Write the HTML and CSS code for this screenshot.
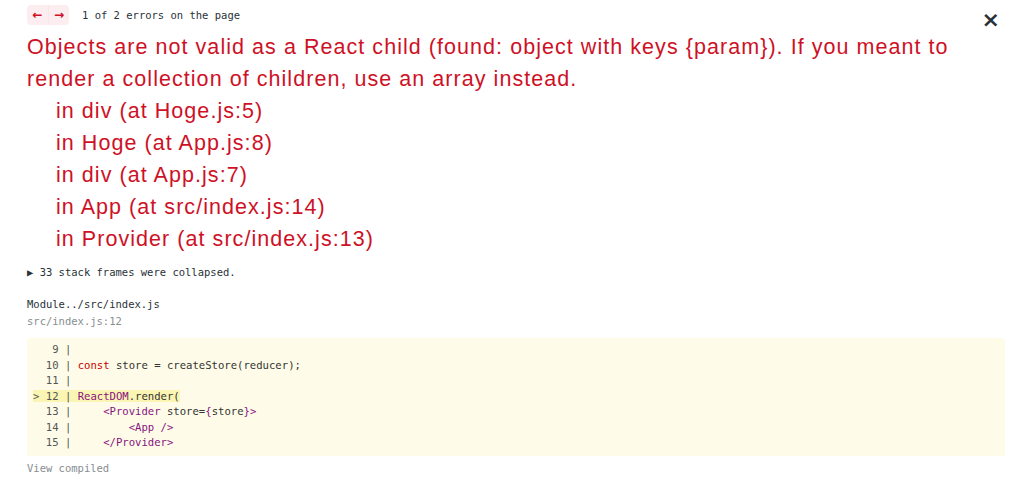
FILE: index.html
```html
<!DOCTYPE html>
<html>
<head>
  <title>Error overlay</title>
  <link rel="stylesheet" href="styles.css">
</head>
<body>
  <div class="overlay">
    <div class="header-bar">
      <div class="nav">
        <button class="nav-btn left">&larr;</button>
        <button class="nav-btn right">&rarr;</button>
      </div>
      <span class="nav-count">1 of 2 errors on the page</span>
    </div>
    <button class="close-btn" title="Close">&times;</button>

    <div class="error-title">
      <div class="message">Objects are not valid as a React child (found: object with keys {param}). If you meant to render a collection of children, use an array instead.</div>
      <div class="stack-line">in div (at Hoge.js:5)</div>
      <div class="stack-line">in Hoge (at App.js:8)</div>
      <div class="stack-line">in div (at App.js:7)</div>
      <div class="stack-line">in App (at src/index.js:14)</div>
      <div class="stack-line">in Provider (at src/index.js:13)</div>
    </div>

    <div class="collapsed">&#9654; 33 stack frames were collapsed.</div>

    <div class="frame">
      <div class="frame-name">Module../src/index.js</div>
      <div class="frame-file">src/index.js:12</div>
      <pre class="code"><span class="ln">   9 | </span>
<span class="ln">  10 | </span><span class="kw">const</span> store = createStore(reducer);
<span class="ln">  11 | </span>
<span class="mark"><span class="ln">&gt; 12 | </span><span class="obj">ReactDOM</span>.render(</span>
<span class="ln">  13 | </span>    <span class="tag">&lt;Provider</span> store=<span class="tag">{</span>store<span class="tag">}&gt;</span>
<span class="ln">  14 | </span>        <span class="tag">&lt;App /&gt;</span>
<span class="ln">  15 | </span>    <span class="tag">&lt;/Provider&gt;</span></pre>
      <div class="view-compiled">View compiled</div>
    </div>
  </div>
</body>
</html>
```

FILE: styles.css
```css
* {
  margin: 0;
  padding: 0;
  box-sizing: border-box;
}

body {
  background: #ffffff;
  color: #293238;
  font-family: 'DejaVu Sans Mono', 'Liberation Mono', monospace;
  font-size: 10.5px;
}

.overlay {
  position: relative;
  padding: 4px 19px 0 27px;
}

.header-bar {
  display: flex;
  align-items: center;
  height: 21px;
}

.nav {
  display: flex;
  margin-right: 13px;
}

.nav-btn {
  width: 21px;
  height: 20px;
  border: none;
  background: rgba(206, 17, 38, 0.07);
  color: #ce1126;
  font-family: 'DejaVu Sans', sans-serif;
  font-size: 12px;
  font-weight: bold;
  line-height: 20px;
  cursor: pointer;
}

.nav-btn.left {
  border-radius: 4px 0 0 4px;
}

.nav-btn.right {
  border-radius: 0 4px 4px 0;
  border-left: 1px solid rgba(206, 17, 38, 0.04);
}

.nav-count {
  color: #293238;
}

.close-btn {
  position: absolute;
  top: 10px;
  right: 24px;
  border: none;
  background: transparent;
  color: #293238;
  font-family: 'DejaVu Sans', sans-serif;
  font-size: 22px;
  font-weight: bold;
  line-height: 20px;
  cursor: pointer;
}

.error-title {
  margin-top: 6px;
  color: #ce1126;
  font-family: 'Liberation Sans', Arial, sans-serif;
  font-size: 21.5px;
  letter-spacing: 1.05px;
  line-height: 32px;
}

.stack-line {
  padding-left: 29px;
}

.collapsed {
  margin-top: 9px;
  line-height: 16px;
  color: #293238;
}

.frame {
  margin-top: 16px;
}

.frame-name {
  line-height: 16px;
  color: #293238;
}

.frame-file {
  line-height: 18px;
  color: #878e91;
}

.code {
  margin-top: 8px;
  padding: 4px 6px 5px;
  background: rgba(251, 245, 180, 0.3);
  border-radius: 3px;
  font-family: 'DejaVu Sans Mono', 'Liberation Mono', monospace;
  font-size: 10.6px;
  line-height: 15.5px;
  color: #333333;
}

.ln {
  color: #555555;
}

.kw {
  color: #c80000;
}

.obj {
  color: #881280;
}

.tag {
  color: #881280;
}

.mark {
  background: rgba(251, 245, 180, 1);
}

.view-compiled {
  margin-top: 5px;
  line-height: 14px;
  color: #878e91;
}
```
